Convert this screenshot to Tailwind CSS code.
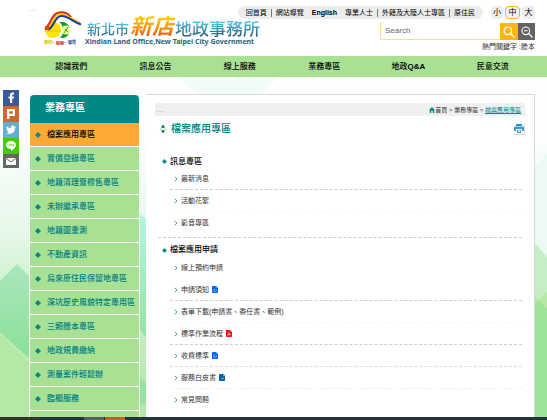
<!DOCTYPE html>
<html lang="zh-Hant">
<head>
<meta charset="utf-8">
<meta name="viewport" content="width=device-width, initial-scale=1">
<title>新北市新店地政事務所 - 檔案應用專區</title>
<script src="https://cdn.jsdelivr.net/npm/@tailwindcss/browser@4"></script>
</head>
<body class="relative flex h-screen flex-col overflow-hidden bg-white font-['Liberation_Sans','Noto_Sans_CJK_TC',sans-serif] text-[7px] leading-[10px] text-[#333]">

<svg width="0" height="0" class="absolute" aria-hidden="true">
  <symbol id="diamond" viewBox="0 0 6 6"><path d="M3 .2 5.800 3 3 5.800.2 3z" fill="#00888a" stroke="#00888a" stroke-width=".3"/></symbol>
  <symbol id="chev" viewBox="0 0 4 6"><path d="M.7.8 3 3 .7 5.200" fill="none" stroke="#2a9d9d" stroke-width=".9"/></symbol>
  <symbol id="doc" viewBox="0 0 7 8"><path d="M.8 0H5l2 2v5.200a.8.8 0 0 1-.8.8H.8a.8.8 0 0 1-.8-.8V.8A.8.8 0 0 1 .8 0z" fill="#0a66ff"/><path d="M5 0v2h2z" fill="#9fc4ff"/><path d="M3.300 3.500 1.800 5l1.500 1.400M4.200 6.200 5.500 4.500" fill="none" stroke="#fff" stroke-width=".7"/></symbol>
  <symbol id="pdf" viewBox="0 0 7 8"><path d="M.8 0H5l2 2v5.200a.8.8 0 0 1-.8.8H.8a.8.8 0 0 1-.8-.8V.8A.8.8 0 0 1 .8 0z" fill="#ee1118"/><path d="M5 0v2h2z" fill="#ffa9a9"/><path d="M3.400 2.800C3.600 5 2.500 6.500 1.500 6.600M3.400 3.200C3.800 5 4.600 5.600 5.600 5.500M2.200 5.600 4.800 5" fill="none" stroke="#fff" stroke-width=".6"/></symbol>
  <symbol id="odf" viewBox="0 0 7 8"><path d="M.8 0H5l2 2v5.200a.8.8 0 0 1-.8.8H.8a.8.8 0 0 1-.8-.8V.8A.8.8 0 0 1 .8 0z" fill="#0a66a0"/><path d="M5 0v2h2z" fill="#a8d0e6"/><path d="M2.600 5.600c.6-.9 1.200-.9 1.600-.2.500-.6 1.100-.5 1.500 0" fill="none" stroke="#fff" stroke-width=".6"/></symbol>
</svg>

<header class="relative z-10 flex h-14 shrink-0 bg-white pr-3 pl-[30px]">
  <a href="#" class="w-3.5 shrink-0 pt-1 text-[#bbb]">...</a>
  <a href="#" class="flex w-0 grow items-start gap-[3px] pt-2.5" aria-label="新北市新店地政事務所">
    <svg viewBox="0 0 38 35" class="mt-px h-[35px] w-[38px] shrink-0" aria-hidden="true">
      <circle cx="9" cy="19" r="8" fill="#ffe500"/>
      <path d="M1 20h16" stroke="#f7a800" stroke-width=".8"/>
      <path d="M15 11h5a8.500 8.500 0 0 1 0 16h-4a10 10 0 0 0 3-8 10 10 0 0 0-4-8z" fill="#199c2d"/>
      <circle cx="22" cy="19" r="4.600" fill="#eafc8e"/>
      <path d="M20 22l4-6M21 18l3 3" stroke="#199c2d" stroke-width=".9"/>
      <path d="M1 18C7 13 8 2 15 1.500c5-1 10 1 12 5" fill="none" stroke="#e2231a" stroke-width="2"/>
      <path d="M3 19C9 14 9 4 16 3.300c7-.5 12 5.500 20 8.500" fill="none" stroke="#ffc400" stroke-width="1.600"/>
      <path d="M4 19C11 15 10 6 17 5c7-.5 11 5.500 20 8.500" fill="none" stroke="#183c9c" stroke-width="2"/>
      <path d="M1 15h4v4H1z" fill="#e2431a"/>
      <text x="0" y="33" font-size="4" font-weight="900" fill="#d8c800">親切</text>
      <text x="8.500" y="33" font-size="4" fill="#d33">•</text>
      <text x="12" y="34" font-size="4" font-weight="900" fill="#d8352b">積極</text>
      <text x="20.500" y="33" font-size="4" fill="#d33">•</text>
      <text x="24" y="33" font-size="4" font-weight="900" fill="#23449c">優質</text>
    </svg>
    <span class="flex shrink-0 flex-col">
      <span class="flex h-7 items-end pl-0.5 leading-none font-medium whitespace-nowrap">
        <span class="bg-linear-to-b from-[#5ccbee] to-[#1f5573] bg-clip-text pb-0.5 text-[14px] text-transparent">新北市</span>
        <span class="bg-linear-to-b from-[#ffd500] via-[#f39a0c] to-[#e8420e] bg-clip-text px-px text-[22px] font-bold text-transparent italic">新店</span>
        <span class="bg-linear-to-b from-[#5ccbee] to-[#1f5573] bg-clip-text text-[17px] text-transparent">地政事務所</span>
      </span>
      <span class="font-['Noto_Sans'] text-[7px] leading-[7px] font-bold whitespace-nowrap text-[#2c6480]">Xindian Land Office,New Taipei City Government</span>
    </span>
  </a>

  <div class="flex shrink-0 flex-col items-end pt-1.5">
    <div class="flex items-center gap-2">
      <nav class="flex h-[13px] items-center rounded-full bg-[#ececec] px-2 whitespace-nowrap text-black">
        <a href="#">回首頁</a><span class="mx-1 h-2 w-px bg-[#777]"></span>
        <a href="#">網站導覽</a>
        <a href="#" class="mx-2 text-[7px] font-bold">English</a>
        <a href="#">專業人士</a><span class="mx-1 h-2 w-px bg-[#777]"></span>
        <a href="#">外籍及大陸人士專區</a><span class="mx-1 h-2 w-px bg-[#777]"></span>
        <a href="#">原住民</a>
      </nav>
      <div class="flex gap-0.5 text-[8px] text-black">
        <button class="h-[13px] w-3 rounded-sm bg-[#eee]">小</button>
        <button class="h-[13px] w-[15px] rounded-sm border border-[#fbb117] bg-[#f4f4f4] leading-none">中</button>
        <button class="h-[13px] w-[13px] rounded-sm bg-[#eee]">大</button>
      </div>
    </div>
    <form class="mt-1 flex h-[17px] w-[155px]">
      <input type="search" aria-label="Search" placeholder="Search" class="w-0 grow border-b border-l border-[#f7dc9a] bg-white px-1 text-[8px] text-[#555] outline-none placeholder:text-[#666]">
      <button type="submit" aria-label="搜尋" class="grid w-[18px] place-items-center bg-[#fdb515]">
        <svg viewBox="0 0 12 12" class="size-3" fill="none" stroke="#fff" stroke-width="1.200"><circle cx="4.800" cy="4.800" r="3.800"/><path d="M7.500 7.500 11.500 11.500"/></svg>
      </button>
      <button type="button" aria-label="進階搜尋" class="grid w-[17px] place-items-center bg-[#636363]">
        <svg viewBox="0 0 12 12" class="size-3" fill="none" stroke="#fff" stroke-width="1.100"><circle cx="4.800" cy="4.800" r="3.800"/><path d="M7.500 7.500 11.500 11.500M3 4.800h3.600"/></svg>
      </button>
    </form>
    <p class="mt-0.5">熱門關鍵字 :<a href="#">謄本</a></p>
  </div>
</header>

<nav class="relative z-10 flex h-[21px] shrink-0 items-center bg-[#a8e193] pr-3 pl-[29px] text-center text-[8px] font-medium text-black">
  <a href="#" class="flex-1">認識我們</a>
  <a href="#" class="flex-1">訊息公告</a>
  <a href="#" class="flex-1">線上服務</a>
  <a href="#" class="flex-1">業務專區</a>
  <a href="#" class="flex-1">地政<b>Q&amp;A</b></a>
  <a href="#" class="flex-1">民意交流</a>
</nav>

<div class="relative min-h-0 grow">
  <svg viewBox="0 0 547 340" preserveAspectRatio="none" class="absolute inset-0 h-full w-full" aria-hidden="true">
    <defs>
      <linearGradient id="base" x1="0" y1="0" x2="0" y2="1"><stop offset="0" stop-color="#fff"/><stop offset=".2" stop-color="#fbfefc"/><stop offset=".45" stop-color="#e6f8ea"/><stop offset=".7" stop-color="#c4efc0"/><stop offset="1" stop-color="#b1e8a2"/></linearGradient>
      <linearGradient id="gem" x1="0" y1="0" x2="0" y2="1"><stop offset="0" stop-color="#abe6bf"/><stop offset="1" stop-color="#7fdf8b"/></linearGradient>
      <linearGradient id="mint" x1="0" y1="0" x2="0" y2="1"><stop offset="0" stop-color="#b4f5e1"/><stop offset="1" stop-color="#97e3a0"/></linearGradient>
    </defs>
    <path d="M0 0h547v340H0z" fill="url(#base)"/>
    <path d="M180 0h98l-22 22h-54zM18 98 32 82 46 98 32 112z" fill="#f1fbf7"/>
    <path d="M0 204 17 187 60 230V310L0 255z" fill="url(#gem)"/>
    <path d="M0 256 60 316V340H0z" fill="#b3e9a5"/>
    <path d="M130 155 139 136 146 142V260L130 240z" fill="url(#mint)"/>
    <path d="M130 310 139 299 146 306V325L139 330z" fill="#98e29f"/>
    <path d="M534 92 547 76V206L534 190z" fill="#ecfaf4"/>
    <path d="M534 165 547 180V215L538 223 534 217z" fill="#c3eec6"/>
    <path d="M534 220 547 228V340H534z" fill="#9ee39a"/>
    <path d="M534 218 538 223 547 214V232L538 223 534 227z" fill="#b7e9a4"/>
  </svg>

  <div class="relative flex h-full pr-3 pl-[29px]">
    <aside class="mt-[18px] w-[111px] shrink-0 border-x border-white">
      <h2 class="flex h-7 items-center rounded-t bg-[#008884] pb-0.5 pl-[15px] text-[10px] font-bold text-white">業務專區</h2>
      <ul class="text-[8px] whitespace-nowrap text-[#007f80] *:border-b *:border-white *:bg-[#a8e193] [&_a]:flex [&_a]:h-[23px] [&_a]:items-center [&_a]:gap-1.5 [&_a]:pl-[5px] [&_a]:font-medium [&_svg]:size-1.5">
        <li class="bg-[#fbaa36]!"><a href="#" class="text-black" aria-current="page"><svg><use href="#diamond"/></svg>檔案應用專區</a></li>
        <li><a href="#"><svg><use href="#diamond"/></svg>實價登錄專區</a></li>
        <li><a href="#"><svg><use href="#diamond"/></svg>地籍清理暨標售專區</a></li>
        <li><a href="#"><svg><use href="#diamond"/></svg>未辦繼承專區</a></li>
        <li><a href="#"><svg><use href="#diamond"/></svg>地籍圖重測</a></li>
        <li><a href="#"><svg><use href="#diamond"/></svg>不動產資訊</a></li>
        <li><a href="#"><svg><use href="#diamond"/></svg>烏來原住民保留地專區</a></li>
        <li><a href="#"><svg><use href="#diamond"/></svg>深坑歷史風貌特定專用區</a></li>
        <li><a href="#"><svg><use href="#diamond"/></svg>三類謄本專區</a></li>
        <li><a href="#"><svg><use href="#diamond"/></svg>地政規費繳納</a></li>
        <li><a href="#"><svg><use href="#diamond"/></svg>測量案件輕鬆辦</a></li>
        <li><a href="#"><svg><use href="#diamond"/></svg>臨櫃服務</a></li>
        <li class="h-6"></li>
      </ul>
    </aside>

    <main class="mt-[17px] ml-1.5 grow border-t border-r border-[#d4d8d6] bg-white px-2 pt-2">
      <div class="mr-px ml-px flex h-[13px] items-center justify-between bg-[#efefef] pr-1 pl-0.5">
        <span class="text-[#999]">...</span>
        <nav class="flex items-center" aria-label="路徑">
          <svg viewBox="0 0 8 8" class="size-1.5" aria-hidden="true"><path d="M4 0 8 4H7v4H5V5H3v3H1V4H0z" fill="#00888a"/></svg>
          <span class="text-[6px]"><a href="#">首頁</a> &gt; <a href="#">業務專區</a> &gt; <a href="#" class="text-[#00888a] underline">檔案應用專區</a></span>
        </nav>
      </div>
      <div class="mt-[7px] flex h-3 items-center justify-between pl-[5px]">
        <h1 class="flex items-center gap-1 text-[10px] font-medium text-[#00807f]">
          <svg viewBox="0 0 8 8" class="size-2" aria-hidden="true"><path d="M2.500 2.500 4 0 5.500 2.500zM2.500 5.500 4 8 5.500 5.500z" fill="#006a55" stroke="#006a55" stroke-width=".6"/><path d="M2.500 2.800 0 4l2.500 1.500zM5.500 2.800 8 4 5.500 5.500z" fill="#b5e3a3"/></svg>檔案應用專區
        </h1>
        <button aria-label="列印" class="mr-px grid size-[11px] place-items-center border-r border-b border-[#ddd]">
          <svg viewBox="0 0 10 9" class="h-[9px] w-2.5"><path d="M2 0h6v2H2z" fill="#2f8fc6"/><path d="M1 2.500h8a1 1 0 0 1 1 1V7H8V5H2v2H0V3.500a1 1 0 0 1 1-1z" fill="#3d9bd0"/><path d="M3 6h4v3H3z" fill="#2f8fc6"/><path d="M3.800 6.500h2.400v1.500H3.800z" fill="#fff"/></svg>
        </button>
      </div>

      <div class="pr-1 pl-1 [&_h2]:flex [&_h2]:items-center [&_h2]:gap-[3px] [&_h2]:pl-1 [&_h2]:text-[8px] [&_h2]:font-medium [&_h2]:text-black [&_h2_svg]:size-[5px] [&_li]:flex [&_li]:h-[22px] [&_li]:items-center [&_li]:gap-[3px] [&_li]:border-b [&_li]:border-dashed [&_li]:pl-1 [&_a]:flex [&_a]:items-center [&_a]:gap-[3px] [&_ul]:ml-3">
        <section class="border-b border-dashed border-[#ccc] pt-5 pb-[3px]">
          <h2 class="h-[13px]"><svg><use href="#diamond"/></svg>訊息專區</h2>
          <ul>
            <li class="border-[#ccc]"><a href="#"><svg class="h-1.5 w-1"><use href="#chev"/></svg>最新消息</a></li>
            <li class="border-[#f6f6f6]"><a href="#"><svg class="h-1.5 w-1"><use href="#chev"/></svg>活動花絮</a></li>
            <li class="border-transparent"><a href="#"><svg class="h-1.5 w-1"><use href="#chev"/></svg>影音專區</a></li>
          </ul>
        </section>
        <section class="pt-[5px]">
          <h2 class="h-3.5"><svg><use href="#diamond"/></svg>檔案應用申請</h2>
          <ul>
            <li class="border-transparent"><a href="#"><svg class="h-1.5 w-1"><use href="#chev"/></svg>線上預約申請</a></li>
            <li class="border-[#ccc]"><a href="#"><svg class="h-1.5 w-1"><use href="#chev"/></svg>申請須知</a><svg class="h-[7px] w-1.5"><use href="#doc"/></svg></li>
            <li class="border-[#f6f6f6]"><a href="#"><svg class="h-1.5 w-1"><use href="#chev"/></svg>表單下載(申請書、委任書、範例)</a></li>
            <li class="border-[#ccc]"><a href="#"><svg class="h-1.5 w-1"><use href="#chev"/></svg>標準作業流程</a><svg class="h-[7px] w-1.5"><use href="#pdf"/></svg></li>
            <li class="border-[#ddd]"><a href="#"><svg class="h-1.5 w-1"><use href="#chev"/></svg>收費標準</a><svg class="h-[7px] w-1.5"><use href="#doc"/></svg></li>
            <li class="border-[#eee]"><a href="#"><svg class="h-1.5 w-1"><use href="#chev"/></svg>服務白皮書</a><svg class="h-[7px] w-1.5"><use href="#odf"/></svg></li>
            <li class="border-transparent"><a href="#"><svg class="h-1.5 w-1"><use href="#chev"/></svg>常見問題</a></li>
          </ul>
        </section>
      </div>
    </main>
  </div>
</div>

<div class="absolute top-[90px] left-[3px] z-20 flex w-4 flex-col [&_a]:block [&_svg]:size-4">
  <a href="#" aria-label="Facebook"><svg viewBox="0 0 16 16"><path d="M0 0h16v16H0z" fill="#3b5998"/><path d="M7 13V8.600H5.500V6.500H7V5c0-1.600 1-2.400 2.400-2.400H11v2h-.9c-.7 0-.9.300-.9.800v1.100H11l-.3 2.100H9.200V13z" fill="#fff"/></svg></a>
  <a href="#" aria-label="Plurk"><svg viewBox="0 0 16 16"><path d="M0 0h16v16H0z" fill="#cf682f"/><path d="M4 3h8v7H6.500v3H4zM6.300 5.200v2.600h3.400V5.200z" fill="#fff" fill-rule="evenodd"/></svg></a>
  <a href="#" aria-label="Twitter"><svg viewBox="0 0 16 16"><path d="M0 0h16v16H0z" fill="#62afd2"/><path d="M13 4.700c-.4.200-.8.300-1.200.3.400-.3.700-.7.900-1.100-.4.200-.8.400-1.300.5a2 2 0 0 0-3.500 1.900C6.200 6.200 4.700 5.400 3.700 4.100c-.6 1-.2 2.200.6 2.800-.3 0-.6-.1-.9-.3 0 1 .7 1.900 1.600 2.100-.3.100-.6.100-.9 0 .3.800 1 1.400 1.900 1.400-.9.700-2 1-3 .9 4.500 2.600 9-.2 8.900-4.900.4-.3.800-.8 1.100-1.400z" fill="#fff"/></svg></a>
  <a href="#" aria-label="LINE"><svg viewBox="0 0 16 16"><path d="M0 0h16v16H0z" fill="#43cc00"/><path d="M8 3c3 0 5 1.700 5 4 0 2.200-2.600 4.300-5 6 .2-1 .2-1.800-.3-1.900C4.900 10.900 3 9.300 3 7c0-2.300 2-4 5-4z" fill="#fff"/><path d="M4.800 5.900v2h1M6.700 5.900v2M7.700 7.900v-2l1.300 2v-2M11.200 5.900h-1.200v2h1.200M10 6.900h1" fill="none" stroke="#43cc00" stroke-width=".5"/></svg></a>
  <a href="#" aria-label="Email"><svg viewBox="0 0 16 16"><path d="M0 0h16v14H0z" fill="#666"/><path d="M3 4h10v7H3z" fill="#fff"/><path d="M3 4.300 8 8l5-3.700" fill="none" stroke="#666" stroke-width="1"/></svg></a>
</div>

<footer class="relative z-10 flex h-[3px] shrink-0 bg-[#25343c]">
  <span class="w-10 bg-[#3a3431]"></span><span class="w-11 bg-[#22313a]"></span><span class="w-5 bg-[#545f65]"></span><span class="ml-px w-5 bg-[#b1672a]"></span>
</footer>
</body>
</html>
